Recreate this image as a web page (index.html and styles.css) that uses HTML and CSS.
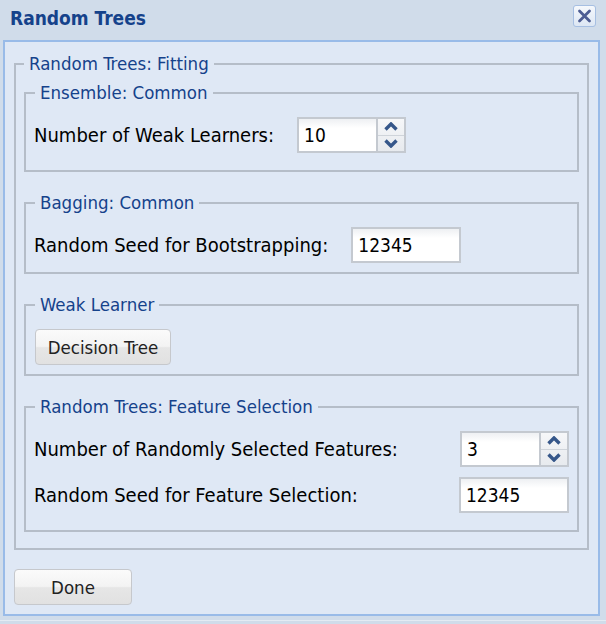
FILE: index.html
```html
<!DOCTYPE html>
<html lang="en">
<head>
<meta charset="utf-8">
<title>Random Trees</title>
<link rel="stylesheet" href="styles.css">
</head>
<body>
<div class="window">
  <div class="titlebar">
    <span class="title">Random Trees</span>
    <span class="close" role="button" aria-label="Close">
      <svg width="21" height="20" viewBox="0 0 21 20"><path d="M5.5 5 L15.5 15 M15.5 5 L5.5 15" stroke="#4d5d93" stroke-width="2.8" stroke-linecap="round" fill="none"/></svg>
    </span>
  </div>
  <div class="body">
    <fieldset class="group outer">
      <legend>Random Trees: Fitting</legend>

      <fieldset class="group inner tall">
        <legend>Ensemble: Common</legend>
        <div class="row">
          <span class="label">Number of Weak Learners:</span>
          <div class="spinner">
            <div class="field spin-field">10</div>
            <div class="spin-btns">
              <span class="spin-up"><svg width="14" height="9" viewBox="0 0 14 9"><path d="M1.5 7.5 L7 2 L12.5 7.5" stroke="#36578a" stroke-width="3.4" fill="none"/></svg></span>
              <span class="spin-down"><svg width="14" height="9" viewBox="0 0 14 9"><path d="M1.5 1.5 L7 7 L12.5 1.5" stroke="#36578a" stroke-width="3.4" fill="none"/></svg></span>
            </div>
          </div>
        </div>
      </fieldset>

      <fieldset class="group inner">
        <legend>Bagging: Common</legend>
        <div class="row">
          <span class="label">Random Seed for Bootstrapping:</span>
          <div class="field text-field">12345</div>
        </div>
      </fieldset>

      <fieldset class="group inner">
        <legend>Weak Learner</legend>
        <div class="row">
          <span class="btn tree-btn" role="button">Decision Tree</span>
        </div>
      </fieldset>

      <fieldset class="group inner tall">
        <legend>Random Trees: Feature Selection</legend>
        <div class="rows">
          <div class="row spread">
            <span class="label">Number of Randomly Selected Features:</span>
            <div class="spinner">
              <div class="field spin-field">3</div>
              <div class="spin-btns">
                <span class="spin-up"><svg width="14" height="9" viewBox="0 0 14 9"><path d="M1.5 7.5 L7 2 L12.5 7.5" stroke="#36578a" stroke-width="3.4" fill="none"/></svg></span>
                <span class="spin-down"><svg width="14" height="9" viewBox="0 0 14 9"><path d="M1.5 1.5 L7 7 L12.5 1.5" stroke="#36578a" stroke-width="3.4" fill="none"/></svg></span>
              </div>
            </div>
          </div>
          <div class="row spread">
            <span class="label">Random Seed for Feature Selection:</span>
            <div class="field text-field">12345</div>
          </div>
        </div>
      </fieldset>
    </fieldset>

    <span class="btn done-btn" role="button">Done</span>
  </div>
  <div class="frame-edge"></div>
</div>
</body>
</html>
```

FILE: styles.css
```css
* { box-sizing: border-box; }

html, body {
  margin: 0;
  padding: 0;
  background: #d0dcea;
  font-family: "DejaVu Sans Condensed", "DejaVu Sans", sans-serif;
  font-stretch: condensed;
}

.window {
  width: 606px;
  height: 624px;
  background: #d0dcea;
}

.titlebar {
  height: 40px;
  display: flex;
  justify-content: space-between;
  align-items: flex-start;
  padding: 5px 10px 0 10px;
}

.title {
  font-weight: bold;
  font-size: 19px;
  line-height: 22px;
  padding-top: 2px;
  color: #15428b;
}

.close {
  width: 23px;
  height: 22px;
  border: 1px solid #a6bfe2;
  border-radius: 3px;
  background: linear-gradient(#f5f8fc, #dde7f4);
  display: flex;
  align-items: center;
  justify-content: center;
}

.body {
  margin: 0 6px 0 3px;
  border: 2px solid #99bbe8;
  background: #dfe8f5;
  padding: 12px 9px 9px 9px;
}

.frame-edge {
  margin: 4px 0 0 0;
  height: 1px;
  background: #e4ebf3;
}

.group {
  margin: 0;
  min-width: 0;
  border: 2px solid #b5bdc8;
}

.group legend {
  padding: 0 5px;
  font-size: 18.5px;
  line-height: 20px;
  color: #15428b;
}

.outer {
  padding: 9px 8px 16px 8px;
}

.inner {
  padding: 14px 8px 9px 8px;
}

.inner legend {
  margin-left: 1px;
}

.inner + .inner {
  margin-top: 21px;
}

.inner.tall {
  padding-bottom: 17px;
}

.row {
  display: flex;
  align-items: center;
  gap: 23px;
}

.rows {
  display: flex;
  flex-direction: column;
  gap: 10px;
}

.row.spread {
  justify-content: space-between;
}

.label {
  font-size: 20px;
  color: #000;
}

.field {
  height: 36px;
  border: 2px solid #c4c9d0;
  background: linear-gradient(#eef0f3, #ffffff 9px);
  padding-left: 5px;
  font-size: 19px;
  line-height: 32px;
  color: #000;
}

.text-field {
  width: 110px;
}

.spinner {
  display: flex;
}

.spin-field {
  width: 80px;
  border-right-width: 1px;
}

.spin-btns {
  width: 29px;
  height: 36px;
  display: flex;
  flex-direction: column;
  border: 2px solid #c4c9d0;
  border-left-width: 1px;
  background: linear-gradient(#f6f7f9, #e7eaee);
}

.spin-up,
.spin-down {
  flex: 1;
  display: flex;
  align-items: center;
  justify-content: center;
}

.spin-up {
  border-bottom: 1px solid #cfd4da;
}

.btn {
  display: flex;
  align-items: center;
  justify-content: center;
  height: 36px;
  border: 1px solid #c6c8cc;
  border-radius: 4px;
  background: linear-gradient(#fbfbfb 0%, #f3f3f3 48%, #e6e6e6 52%, #e1e1e1 100%);
  font-size: 18.5px;
  color: #222;
}

.tree-btn {
  width: 136px;
  margin-left: 1px;
}

.done-btn {
  width: 118px;
  margin-top: 19px;
}
```
